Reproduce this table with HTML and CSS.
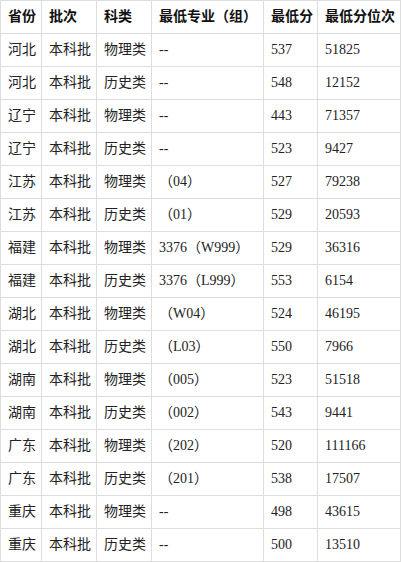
FILE: index.html
```html
<!DOCTYPE html>
<html lang="zh">
<head>
<meta charset="utf-8">
<link rel="stylesheet" href="styles.css">
</head>
<body>
<table class="score">
<colgroup>
<col class="c1"><col class="c2"><col class="c3"><col class="c4"><col class="c5"><col class="c6">
</colgroup>
<thead>
<tr><th>省份</th><th>批次</th><th>科类</th><th>最低专业（组）</th><th>最低分</th><th>最低分位次</th></tr>
</thead>
<tbody>
<tr><td>河北</td><td>本科批</td><td>物理类</td><td>--</td><td>537</td><td>51825</td></tr>
<tr><td>河北</td><td>本科批</td><td>历史类</td><td>--</td><td>548</td><td>12152</td></tr>
<tr><td>辽宁</td><td>本科批</td><td>物理类</td><td>--</td><td>443</td><td>71357</td></tr>
<tr><td>辽宁</td><td>本科批</td><td>历史类</td><td>--</td><td>523</td><td>9427</td></tr>
<tr><td>江苏</td><td>本科批</td><td>物理类</td><td>（04）</td><td>527</td><td>79238</td></tr>
<tr><td>江苏</td><td>本科批</td><td>历史类</td><td>（01）</td><td>529</td><td>20593</td></tr>
<tr><td>福建</td><td>本科批</td><td>物理类</td><td>3376（W999）</td><td>529</td><td>36316</td></tr>
<tr><td>福建</td><td>本科批</td><td>历史类</td><td>3376（L999）</td><td>553</td><td>6154</td></tr>
<tr><td>湖北</td><td>本科批</td><td>物理类</td><td>（W04）</td><td>524</td><td>46195</td></tr>
<tr><td>湖北</td><td>本科批</td><td>历史类</td><td>（L03）</td><td>550</td><td>7966</td></tr>
<tr><td>湖南</td><td>本科批</td><td>物理类</td><td>（005）</td><td>523</td><td>51518</td></tr>
<tr><td>湖南</td><td>本科批</td><td>历史类</td><td>（002）</td><td>543</td><td>9441</td></tr>
<tr><td>广东</td><td>本科批</td><td>物理类</td><td>（202）</td><td>520</td><td>111166</td></tr>
<tr><td>广东</td><td>本科批</td><td>历史类</td><td>（201）</td><td>538</td><td>17507</td></tr>
<tr><td>重庆</td><td>本科批</td><td>物理类</td><td>--</td><td>498</td><td>43615</td></tr>
<tr><td>重庆</td><td>本科批</td><td>历史类</td><td>--</td><td>500</td><td>13510</td></tr>
</tbody>
</table>
</body>
</html>
```
FILE: styles.css
```css
html, body {
  margin: 0;
  padding: 0;
  background: #ffffff;
}
.score {
  border-collapse: collapse;
  table-layout: fixed;
  width: 400px;
  font-family: "Liberation Serif", "Noto Sans CJK SC", serif;
  font-size: 14px;
  color: #222222;
}
.c1 { width: 41px; }
.c2 { width: 55px; }
.c3 { width: 55px; }
.c4 { width: 112px; }
.c5 { width: 54px; }
.c6 { width: 83px; }
.score th, .score td {
  border: 1px solid #dddddd;
  height: 33px;
  padding: 0 0 0 7px;
  text-align: left;
  white-space: nowrap;
  box-sizing: border-box;
  line-height: 20px;
}
.score th {
  font-weight: bold;
  color: #111111;
}
```
